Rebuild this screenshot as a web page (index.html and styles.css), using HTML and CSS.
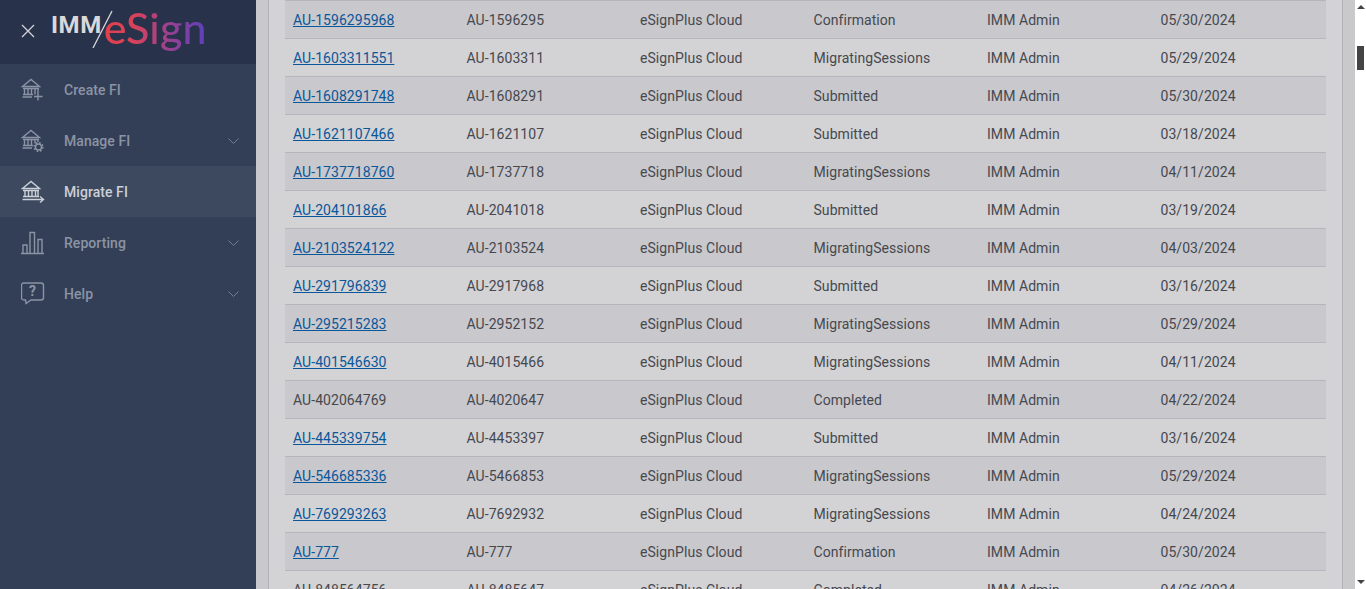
FILE: index.html
```html
<!DOCTYPE html>
<html>
    <head>
        <title>Migrate FI</title>
        <link rel="stylesheet" href="styles.css">
    </head>
    <body>
        <div class="sidebar">
            <div class="brand">
                <svg class="close-icon" width="14" height="14" viewBox="0 0 14 14"><path d="M1 1L13 13M13 1L1 13"/></svg>
                <div class="logo">
                    <span class="logo-imm">IMM</span>
                    <svg class="logo-slash" width="22" height="39" viewBox="0 0 22 39"><path d="M20 1L1 38"/></svg>
                    <span class="logo-esign">eSign</span>
                </div>
            </div>
            <a class="menu-item">
                <svg class="menu-icon" width="24" height="24" viewBox="0 0 24 24"><path d="M1.500 8.500L10 1.500L18.500 8.500ZM2 10.500H18M3.500 10.500V16.500M7 10.500V16.500M10.500 10.500V16.500M14 10.500V16.500M17 10.500V15M2 16.500H12M1.500 19H11M17 14.500V22.500M13 18.500H21.500"/></svg>
                <span class="menu-label">Create FI</span>
            </a>
            <a class="menu-item">
                <svg class="menu-icon" width="24" height="24" viewBox="0 0 24 24"><path d="M1.500 8.500L10 1.500L18.500 8.500ZM2 10.500H18M3.500 10.500V16.500M7 10.500V16.500M10.500 10.500V16.500M14 10.500V14.500M17 10.500V13M2 16.500H12M1.500 19H11"/><circle cx="17.500" cy="18" r="3"/><circle class="gear-teeth" cx="17.500" cy="18" r="4.300"/></svg>
                <span class="menu-label">Manage FI</span>
                <svg class="chevron" width="11" height="6" viewBox="0 0 11 6"><path d="M.5 .5L5.500 5.500L10.500 .5"/></svg>
            </a>
            <a class="menu-item active">
                <svg class="menu-icon" width="24" height="24" viewBox="0 0 24 24"><path d="M1.500 8.500L10 1.500L18.500 8.500ZM2 10.500H18M4 10.500V16M7.500 10.500V16M11 10.500V16M14.500 10.500V16M17 10.500V16M2 16.500H18M1.500 19.500H22.500M19 16.500L22.500 19.500L19 22.500"/></svg>
                <span class="menu-label">Migrate FI</span>
            </a>
            <a class="menu-item">
                <svg class="menu-icon" width="24" height="24" viewBox="0 0 24 24"><path d="M0 22.500H23M2 22.500V14H6V22.500M9 22.500V1.500H13.500V22.500M17 22.500V8.500H21V22.500"/></svg>
                <span class="menu-label">Reporting</span>
                <svg class="chevron" width="11" height="6" viewBox="0 0 11 6"><path d="M.5 .5L5.500 5.500L10.500 .5"/></svg>
            </a>
            <a class="menu-item">
                <svg class="menu-icon" width="24" height="24" viewBox="0 0 24 24"><path d="M3 1H20Q22.500 1 22.500 3.500V15.500Q22.500 18 20 18H10L5 21.500L4.500 18H3Q.5 18 .5 15.500V3.500Q.5 1 3 1Z"/><text class="help-mark" x="11.500" y="14">?</text></svg>
                <span class="menu-label">Help</span>
                <svg class="chevron" width="11" height="6" viewBox="0 0 11 6"><path d="M.5 .5L5.500 5.500L10.500 .5"/></svg>
            </a>
        </div>
        <div class="content">
            <div class="panel">
                <table class="grid">
                    <tr><td><a href="#">AU-1596295968</a></td><td>AU-1596295</td><td>eSignPlus Cloud</td><td>Confirmation</td><td>IMM Admin</td><td>05/30/2024</td></tr>
                    <tr><td><a href="#">AU-1603311551</a></td><td>AU-1603311</td><td>eSignPlus Cloud</td><td>MigratingSessions</td><td>IMM Admin</td><td>05/29/2024</td></tr>
                    <tr><td><a href="#">AU-1608291748</a></td><td>AU-1608291</td><td>eSignPlus Cloud</td><td>Submitted</td><td>IMM Admin</td><td>05/30/2024</td></tr>
                    <tr><td><a href="#">AU-1621107466</a></td><td>AU-1621107</td><td>eSignPlus Cloud</td><td>Submitted</td><td>IMM Admin</td><td>03/18/2024</td></tr>
                    <tr><td><a href="#">AU-1737718760</a></td><td>AU-1737718</td><td>eSignPlus Cloud</td><td>MigratingSessions</td><td>IMM Admin</td><td>04/11/2024</td></tr>
                    <tr><td><a href="#">AU-204101866</a></td><td>AU-2041018</td><td>eSignPlus Cloud</td><td>Submitted</td><td>IMM Admin</td><td>03/19/2024</td></tr>
                    <tr><td><a href="#">AU-2103524122</a></td><td>AU-2103524</td><td>eSignPlus Cloud</td><td>MigratingSessions</td><td>IMM Admin</td><td>04/03/2024</td></tr>
                    <tr><td><a href="#">AU-291796839</a></td><td>AU-2917968</td><td>eSignPlus Cloud</td><td>Submitted</td><td>IMM Admin</td><td>03/16/2024</td></tr>
                    <tr><td><a href="#">AU-295215283</a></td><td>AU-2952152</td><td>eSignPlus Cloud</td><td>MigratingSessions</td><td>IMM Admin</td><td>05/29/2024</td></tr>
                    <tr><td><a href="#">AU-401546630</a></td><td>AU-4015466</td><td>eSignPlus Cloud</td><td>MigratingSessions</td><td>IMM Admin</td><td>04/11/2024</td></tr>
                    <tr><td>AU-402064769</td><td>AU-4020647</td><td>eSignPlus Cloud</td><td>Completed</td><td>IMM Admin</td><td>04/22/2024</td></tr>
                    <tr><td><a href="#">AU-445339754</a></td><td>AU-4453397</td><td>eSignPlus Cloud</td><td>Submitted</td><td>IMM Admin</td><td>03/16/2024</td></tr>
                    <tr><td><a href="#">AU-546685336</a></td><td>AU-5466853</td><td>eSignPlus Cloud</td><td>MigratingSessions</td><td>IMM Admin</td><td>05/29/2024</td></tr>
                    <tr><td><a href="#">AU-769293263</a></td><td>AU-7692932</td><td>eSignPlus Cloud</td><td>MigratingSessions</td><td>IMM Admin</td><td>04/24/2024</td></tr>
                    <tr><td><a href="#">AU-777</a></td><td>AU-777</td><td>eSignPlus Cloud</td><td>Confirmation</td><td>IMM Admin</td><td>05/30/2024</td></tr>
                    <tr><td>AU-848564756</td><td>AU-8485647</td><td>eSignPlus Cloud</td><td>Completed</td><td>IMM Admin</td><td>04/26/2024</td></tr>
                </table>
            </div>
        </div>
        <div class="scrollbar">
            <span class="arrow-up"></span>
            <span class="thumb"></span>
            <span class="arrow-down"></span>
        </div>
    </body>
</html>
```

FILE: styles.css
```css
html, body {
    height: 100%;
}
body {
    margin: 0;
    display: flex;
    overflow: hidden;
    background-color: #c9c9cb;
    font-family: Roboto, "Liberation Sans", sans-serif;
    font-size: 14px;
    letter-spacing: .06px;
    color: #46484f;
}
.sidebar {
    flex: none;
    width: 256px;
    background-color: #333f57;
}
.brand {
    height: 64px;
    display: flex;
    align-items: flex-start;
    background-color: #28324a;
}
.close-icon {
    margin: 24px 0 0 21px;
    flex: none;
}
.close-icon path {
    fill: none;
    stroke: #d2d4d9;
    stroke-width: 1.3;
}
.logo {
    position: relative;
    display: flex;
    align-items: flex-start;
    margin-left: 16px;
}
.logo-imm {
    margin-top: 11px;
    font-size: 24px;
    line-height: 28px;
    font-weight: 700;
    letter-spacing: .6px;
    color: #d9d9dc;
}
.logo-slash {
    position: absolute;
    left: 41px;
    top: 10px;
}
.logo-slash path {
    fill: none;
    stroke: #d9d9dc;
    stroke-width: 1.3;
}
.logo-esign {
    margin: 3px 0 0 2px;
    font-family: Lato, sans-serif;
    font-size: 43px;
    line-height: 50px;
    font-weight: 500;
    background: linear-gradient(90deg, #e2404c 0%, #d8435a 30%, #9a4190 62%, #5a40bc 100%);
    -webkit-background-clip: text;
    background-clip: text;
    color: transparent;
}
.menu-item {
    height: 51px;
    display: flex;
    align-items: center;
    padding-left: 21px;
    color: #8b94a5;
    font-weight: 500;
}
.menu-item.active {
    background-color: #3d495f;
    color: #ccd0d8;
}
.menu-icon {
    flex: none;
    margin-right: 19px;
}
.menu-icon path, .menu-icon circle {
    fill: none;
    stroke: currentColor;
    stroke-width: 1.4;
}
.menu-icon .gear-teeth {
    stroke-width: 1.6;
    stroke-dasharray: 1.700 1.680;
}
.help-mark {
    fill: currentColor;
    font-size: 14px;
    font-weight: 700;
    text-anchor: middle;
}
.menu-label {
    flex: 1;
}
.chevron {
    flex: none;
    margin-right: 17px;
}
.chevron path {
    fill: none;
    stroke: #737d90;
}
.content {
    flex: 1;
    min-width: 0;
    padding: 0 12px;
}
.panel {
    height: 100%;
    padding: 0 16px;
    background-color: #d3d3d5;
    border-left: 1px solid #b2b2b6;
    border-right: 1px solid #b2b2b6;
}
.grid {
    width: 100%;
    table-layout: fixed;
    border-collapse: collapse;
    border-top: 1px solid #b6b6bc;
}
.grid td {
    height: 37px;
    padding: 0 8px;
    border-bottom: 1px solid #b6b6bc;
}
.grid tr:nth-child(odd) {
    background-color: #c9c8cd;
}
.grid a {
    color: #0a5799;
}
.scrollbar {
    flex: none;
    width: 11px;
    display: flex;
    flex-direction: column;
    align-items: center;
    background-color: #fff;
}
.arrow-up {
    margin-top: 5px;
    border: 4px solid transparent;
    border-top: 0;
    border-bottom-color: #444;
}
.thumb {
    width: 7px;
    height: 24px;
    margin-top: 37px;
    background-color: #444;
}
.arrow-down {
    margin-top: auto;
    margin-bottom: 5px;
    border: 4px solid transparent;
    border-bottom: 0;
    border-top-color: #444;
}
```
